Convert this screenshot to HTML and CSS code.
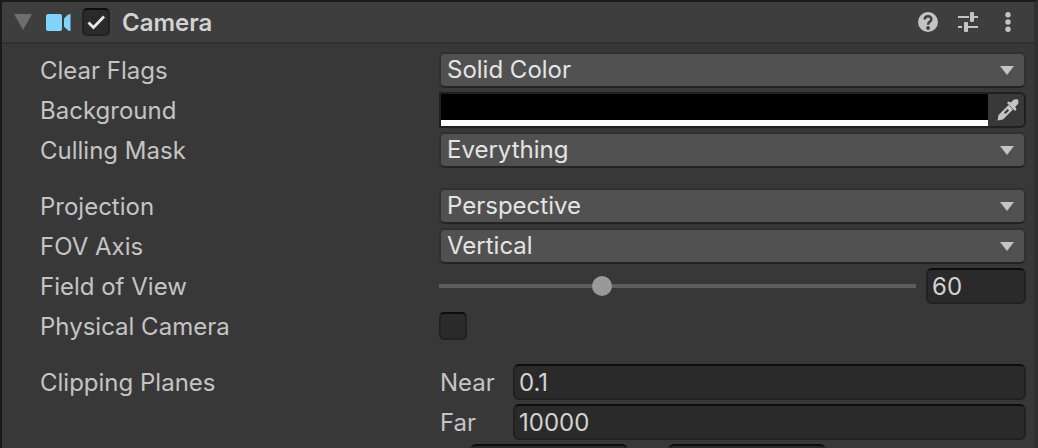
FILE: index.html
```
<!DOCTYPE html>
<html lang="en">
<head>
    <meta charset="UTF-8">
    <meta name="viewport" content="width=device-width, initial-scale=1.0">
    <title>Camera</title>
    <link rel="stylesheet" href="styles.css">
</head>
<body>
    <div class="inspector">
        <header class="header">
            <button class="icon-btn foldout" aria-label="Collapse">
                <svg width="18" height="16" viewBox="0 0 18 16"><path d="M0 0h18L9 16z" fill="#6e6e6e"/></svg>
            </button>
            <svg class="camera-icon" width="25" height="17" viewBox="0 0 25 17" fill="#81d5fc">
                <rect width="16" height="17" rx="2"/>
                <path d="M18 4.500L21 1.500Q22.500 0 24.500 0v17q-2 0-3.500-1.500L18 12.500z"/>
            </svg>
            <input type="checkbox" class="checkbox" id="enabled" checked>
            <label class="title" for="enabled">Camera</label>
            <div class="header-actions">
                <button class="icon-btn" aria-label="Help">
                    <svg width="20" height="20" viewBox="0 0 20 20">
                        <circle cx="10" cy="10" r="10" fill="#c4c4c4"/>
                        <path d="M6.700 7.600C6.700 3.200 13.400 3.400 13.400 7.200C13.400 9.700 10.100 9.500 10.100 12.700" fill="none" stroke="#3e3e3e" stroke-width="2.500"/>
                        <circle cx="10.100" cy="16" r="1.900" fill="#3e3e3e"/>
                    </svg>
                </button>
                <button class="icon-btn" aria-label="Presets">
                    <svg width="20" height="20" viewBox="0 0 20 20" fill="#c4c4c4">
                        <path d="M0 4h11v2H0zM16 4h4v2h-4zM0 14h4v2H0zM10 14h10v2H10z"/>
                        <rect x="12" y="0" width="4" height="10" rx="1"/>
                        <rect x="6" y="10" width="4" height="10" rx="1"/>
                    </svg>
                </button>
                <button class="icon-btn" aria-label="More">
                    <svg width="20" height="20" viewBox="0 0 20 20" fill="#c4c4c4">
                        <circle cx="10" cy="2.700" r="2.700"/>
                        <circle cx="10" cy="10" r="2.700"/>
                        <circle cx="10" cy="17.300" r="2.700"/>
                    </svg>
                </button>
            </div>
        </header>

        <main class="properties">
            <div class="row">
                <label class="name" for="clearFlags">Clear Flags</label>
                <div class="dropdown">
                    <select id="clearFlags"><option>Solid Color</option><option>Skybox</option></select>
                </div>
            </div>
            <div class="row">
                <label class="name" for="background">Background</label>
                <div class="color-field">
                    <button class="swatch" id="background" aria-label="Background color"></button>
                    <button class="icon-btn picker" aria-label="Pick color">
                        <svg width="22" height="22" viewBox="0 0 22 22" fill="#c4c4c4">
                            <path d="M10 4L11.500 2.500 14 3.500 16.500 .8Q17.500 0 21 .5Q21.800 4 21 5L18.300 7.700 19.500 10.500 18 12z"/>
                            <path fill-rule="evenodd" d="M11.500 6L1.500 16 .5 21.500 6 20.500 16 10.500zM10.500 10L12 11.500 8.500 15 7 13.500z"/>
                        </svg>
                    </button>
                </div>
            </div>
            <div class="row">
                <label class="name" for="cullingMask">Culling Mask</label>
                <div class="dropdown">
                    <select id="cullingMask"><option>Everything</option><option>Nothing</option></select>
                </div>
            </div>
            <div class="row spaced">
                <label class="name" for="projection">Projection</label>
                <div class="dropdown">
                    <select id="projection"><option>Perspective</option><option>Orthographic</option></select>
                </div>
            </div>
            <div class="row">
                <label class="name" for="fovAxis">FOV Axis</label>
                <div class="dropdown">
                    <select id="fovAxis"><option>Vertical</option><option>Horizontal</option></select>
                </div>
            </div>
            <div class="row">
                <label class="name" for="fov">Field of View</label>
                <div class="slider-field">
                    <input type="range" class="slider" id="fov" min="0" max="179" value="60">
                    <input type="text" class="text-field" id="fovValue" value="60" aria-label="Field of View value">
                </div>
            </div>
            <div class="row">
                <label class="name" for="physical">Physical Camera</label>
                <input type="checkbox" class="checkbox" id="physical">
            </div>
            <div class="row spaced">
                <span class="name">Clipping Planes</span>
                <div class="sub-field">
                    <label class="name" for="near">Near</label>
                    <input type="text" class="text-field" id="near" value="0.1">
                </div>
            </div>
            <div class="row">
                <div class="sub-field sub-only">
                    <label class="name" for="far">Far</label>
                    <input type="text" class="text-field" id="far" value="10000">
                </div>
            </div>
            <div class="row">
                <div class="rect-fields sub-only">
                    <input type="text" class="text-field" aria-label="Viewport X">
                    <input type="text" class="text-field" aria-label="Viewport Y">
                </div>
            </div>
        </main>
    </div>

    <script>
        const fov = document.getElementById('fov');
        const fovValue = document.getElementById('fovValue');

        fov.addEventListener('input', () => {
            fovValue.value = fov.value;
        });
        fovValue.addEventListener('change', () => {
            fov.value = fovValue.value;
        });
    </script>
</body>
</html>
```
FILE: styles.css
```
* {
    box-sizing: border-box;
}
body {
    margin: 0;
    background-color: #383838;
    color: #c4c4c4;
    font-family: Inter, "Liberation Sans", sans-serif;
    font-size: 24px;
    line-height: 32px;
}
input, select, button {
    font: inherit;
    color: inherit;
    margin: 0;
}
.inspector {
    height: 100vh;
    overflow: hidden;
    border-top: 2px solid #1a1a1a;
    border-left: 2px solid #1a1a1a;
    border-right: 4px solid #303030;
}
.header {
    display: flex;
    align-items: center;
    height: 42px;
    padding: 0 16px 0 12px;
    background-color: #3e3e3e;
    border-bottom: 2px solid #303030;
}
.icon-btn {
    display: flex;
    padding: 0;
    border: none;
    background: none;
    cursor: pointer;
}
.camera-icon {
    margin: 0 11px 0 14px;
}
.title {
    margin-left: 12px;
    padding-top: 2px;
    font-weight: 600;
    color: #d2d2d2;
}
.header-actions {
    display: flex;
    gap: 20px;
    margin-left: auto;
}
.checkbox {
    appearance: none;
    width: 28px;
    height: 28px;
    border: 2px solid #212121;
    border-top-color: #0d0d0d;
    border-radius: 5px;
    background-color: #2a2a2a;
}
.checkbox:checked {
    background-image: url("data:image/svg+xml,%3Csvg xmlns='http://www.w3.org/2000/svg' viewBox='0 0 24 24'%3E%3Cpath d='M4.500 12.500l5 5L20 6.500' fill='none' stroke='%23e8e8e8' stroke-width='2.800'/%3E%3C/svg%3E");
}
.properties {
    display: flex;
    flex-direction: column;
    gap: 4px;
    padding: 8px 8px 0 37px;
}
.row {
    display: grid;
    grid-template-columns: 400px 1fr;
    align-items: center;
    height: 36px;
}
.name {
    padding: 2px 0 0 1px;
}
.spaced {
    margin-top: 16px;
}
.sub-only {
    grid-column: 2;
}
.dropdown {
    position: relative;
    display: flex;
}
.dropdown::after {
    content: "";
    position: absolute;
    right: 12px;
    top: 14px;
    border: 7px solid transparent;
    border-top: 9px solid #c4c4c4;
    border-bottom: none;
    pointer-events: none;
}
.dropdown select {
    appearance: none;
    width: 100%;
    height: 36px;
    padding: 0 36px 2px 6px;
    border: 2px solid #303030;
    border-bottom-color: #242424;
    border-radius: 6px;
    background-color: #515151;
    color: #e4e4e4;
}
.color-field {
    display: flex;
    height: 36px;
    border: 2px solid #202020;
    border-radius: 0 6px 6px 0;
}
.swatch {
    flex: 1;
    padding: 0;
    border: none;
    border-bottom: 6px solid #fff;
    background-color: #000;
}
.picker {
    width: 36px;
    padding-left: 4px;
    align-items: center;
    justify-content: center;
}
.slider-field {
    display: flex;
    align-items: center;
    gap: 10px;
}
.slider {
    appearance: none;
    flex: 1;
    min-width: 0;
    height: 20px;
    background: linear-gradient(#5e5e5e, #5e5e5e) center / 100% 4px no-repeat;
}
.slider::-webkit-slider-thumb {
    appearance: none;
    width: 20px;
    height: 20px;
    border-radius: 50%;
    background-color: #999;
}
.text-field {
    width: 100%;
    min-width: 0;
    height: 36px;
    padding: 0 4px;
    border: 2px solid #212121;
    border-top-color: #0d0d0d;
    border-radius: 6px;
    background-color: #2a2a2a;
    color: #d2d2d2;
}
.slider-field .text-field {
    width: 100px;
}
.sub-field {
    display: grid;
    grid-template-columns: 74px 1fr;
    align-items: center;
}
.rect-fields {
    display: flex;
    gap: 40px;
    padding-left: 31px;
}
.rect-fields .text-field {
    width: 158px;
}
```
